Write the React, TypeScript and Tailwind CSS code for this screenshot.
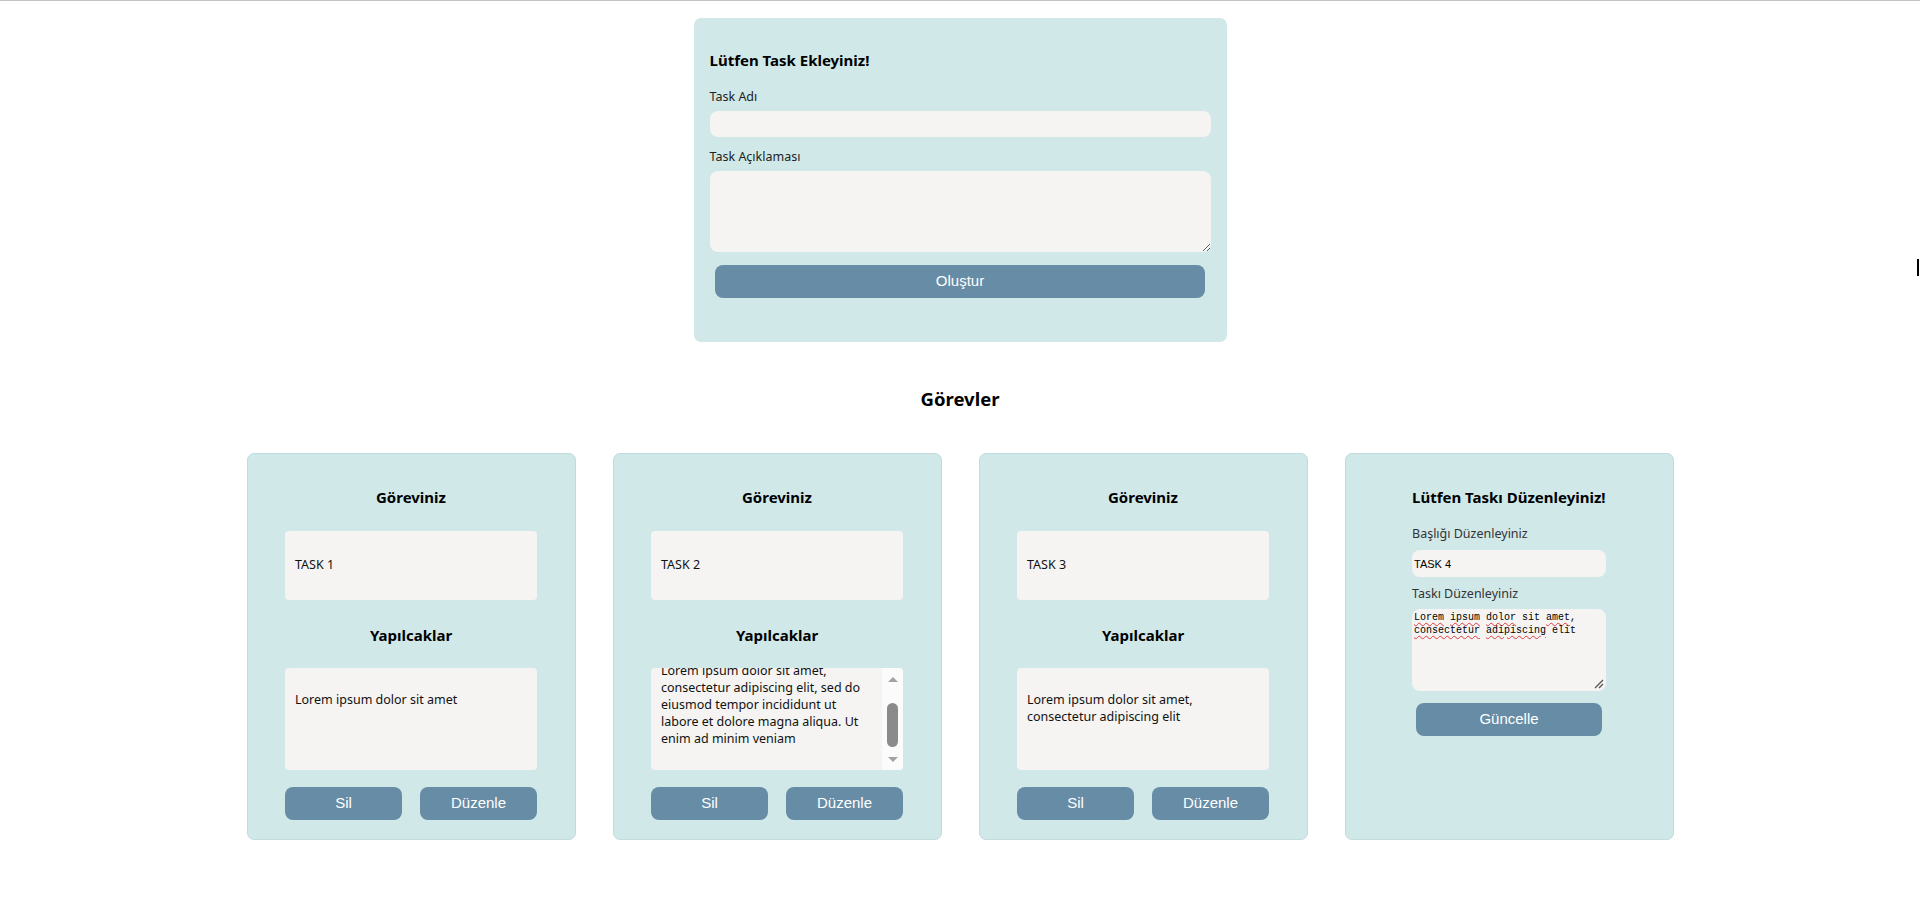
import { useEffect, useRef } from "react"

const tasks = [
  { title: "TASK 1", lines: ["Lorem ipsum dolor sit amet"], scroll: false },
  {
    title: "TASK 2",
    lines: [
      "Lorem ipsum dolor sit amet,",
      "consectetur adipiscing elit, sed do",
      "eiusmod tempor incididunt ut",
      "labore et dolore magna aliqua. Ut",
      "enim ad minim veniam",
    ],
    scroll: true,
  },
  { title: "TASK 3", lines: ["Lorem ipsum dolor sit amet,", "consectetur adipiscing elit"], scroll: false },
]

const FakeScrollbar = () => (
  <div className="w-[21px] h-full bg-[#fbfbfb] flex flex-col items-center pt-[9px] shrink-0">
    <svg width="10" height="5" viewBox="0 0 10 5">
      <path d="M0 5 L5 0 L10 5 Z" fill="#a3a3a3" />
    </svg>
    <div className="mt-[21px] w-[11px] h-[44px] rounded-full bg-[#8b8b8b]" />
    <svg className="mt-[10px]" width="10" height="5" viewBox="0 0 10 5">
      <path d="M0 0 L10 0 L5 5 Z" fill="#a3a3a3" />
    </svg>
  </div>
)

const TaskCard = ({ title, lines, scroll }: { title: string; lines: string[]; scroll: boolean }) => {
  const boxRef = useRef<HTMLDivElement>(null)
  useEffect(() => {
    if (scroll && boxRef.current) boxRef.current.scrollTop = 9999
  }, [scroll])
  return (
    <div className="w-[329px] h-[387px] bg-[#d1e8e9] border border-[#c2dcde] rounded-[7px] flex flex-col items-center">
      <div className="mt-[33px] text-[15px] leading-[21px] font-bold text-black">Göreviniz</div>
      <div className="mt-[23px] w-[252px] h-[69px] bg-[#f5f4f2] rounded-[4px] flex items-center px-[10px] text-[12.5px] text-[#111]">
        {title}
      </div>
      <div className="mt-[25px] text-[15px] leading-[21px] font-bold text-black">Yapılcaklar</div>
      <div className="mt-[22px] w-[252px] h-[102px] bg-[#f5f4f2] rounded-[4px] overflow-hidden flex">
        <div ref={boxRef} className="flex-1 h-full overflow-hidden px-[10px] py-[10px] text-[12.5px] leading-[17px] text-[#111]">
          <p className="my-[13px]">
            {lines.map((l) => (
              <span key={l} className="block whitespace-nowrap">
                {l}
              </span>
            ))}
          </p>
        </div>
        {scroll && <FakeScrollbar />}
      </div>
      <div className="mt-[17px] w-[252px] flex justify-between">
        <button className="w-[117px] h-[33px] rounded-[8px] bg-[#678ca6] text-white text-[15px] font-['Liberation_Sans',Arial,sans-serif]">
          Sil
        </button>
        <button className="w-[117px] h-[33px] rounded-[8px] bg-[#678ca6] text-white text-[15px] font-['Liberation_Sans',Arial,sans-serif]">
          Düzenle
        </button>
      </div>
    </div>
  )
}

const Squiggle = ({ children }: { children: string }) => (
  <span className="underline decoration-wavy decoration-[#e0393e] decoration-1 underline-offset-[2px]">{children}</span>
)

const EditCard = () => {
  return (
    <div className="w-[329px] h-[387px] bg-[#d1e8e9] border border-[#c2dcde] rounded-[7px] flex flex-col items-center">
      <div className="mt-[33px] w-[194px] flex flex-col">
        <div className="text-[15px] leading-[21px] font-bold text-black whitespace-nowrap">Lütfen Taskı Düzenleyiniz!</div>
        <label className="mt-[17px] text-[12.5px] leading-[17px] text-[#333]">Başlığı Düzenleyiniz</label>
        <input
          defaultValue="TASK 4"
          className="mt-[8px] h-[27px] rounded-[8px] bg-[#f5f4f2] px-[2px] text-[11px] text-black outline-none font-['Liberation_Sans',Arial,sans-serif]"
        />
        <label className="mt-[8px] text-[12.5px] leading-[17px] text-[#333]">Taskı Düzenleyiniz</label>
        <div className="relative mt-[7px] h-[82px] rounded-[8px] bg-[#f5f4f2] px-[2px] pt-[3px] text-[10px] leading-[12.5px] text-black font-['Liberation_Mono',monospace]">
          <Squiggle>Lorem</Squiggle> <Squiggle>ipsum</Squiggle> <Squiggle>dolor</Squiggle> sit <Squiggle>amet</Squiggle>,
          <br />
          <Squiggle>consectetur</Squiggle> <Squiggle>adipiscing</Squiggle> elit
          <svg className="absolute right-[2px] bottom-[2px]" width="10" height="10" viewBox="0 0 10 10">
            <line x1="1" y1="9" x2="9" y2="1" stroke="#555" strokeWidth="1.2" />
            <line x1="5" y1="9" x2="9" y2="5" stroke="#555" strokeWidth="1.2" />
          </svg>
        </div>
        <button className="mt-[12px] mx-auto w-[186px] h-[33px] rounded-[8px] bg-[#678ca6] text-white text-[15px] font-['Liberation_Sans',Arial,sans-serif]">
          Güncelle
        </button>
      </div>
    </div>
  )
}

export default function App() {
  return (
    <div className="relative min-h-screen bg-white border-t border-[#c4c4c4] font-['Noto_Sans',sans-serif] text-black">
      <div className="pt-[17px] flex justify-center">
        <div className="w-[533px] h-[324px] bg-[#d1e8e9] rounded-[7px] px-4 pt-[32px] flex flex-col">
          <div className="text-[15px] leading-[21px] font-bold">Lütfen Task Ekleyiniz!</div>
          <label className="mt-[17px] text-[12.5px] leading-[17px] text-[#222]">Task Adı</label>
          <input className="mt-[6px] h-[26px] w-full rounded-[8px] bg-[#f5f4f2] outline-none px-[2px]" />
          <label className="mt-[11px] text-[12.5px] leading-[17px] text-[#222]">Task Açıklaması</label>
          <textarea className="mt-[6px] h-[81px] w-full rounded-[8px] bg-[#f5f4f2] outline-none px-[2px] resize-y" />
          <button className="mt-[13px] mx-auto w-[490px] h-[33px] rounded-[8px] bg-[#678ca6] text-white text-[15px] font-['Liberation_Sans',Arial,sans-serif]">
            Oluştur
          </button>
        </div>
      </div>

      <h3 className="mt-[44px] text-center text-[18.5px] leading-[25px] font-bold">Görevler</h3>

      <div className="mt-[42px] flex justify-center gap-[37px]">
        {tasks.map((t) => (
          <TaskCard key={t.title} title={t.title} lines={t.lines} scroll={t.scroll} />
        ))}
        <EditCard />
      </div>

      <div className="absolute left-[1917px] top-[258px] w-[2px] h-[17px] bg-black" />
    </div>
  )
}
